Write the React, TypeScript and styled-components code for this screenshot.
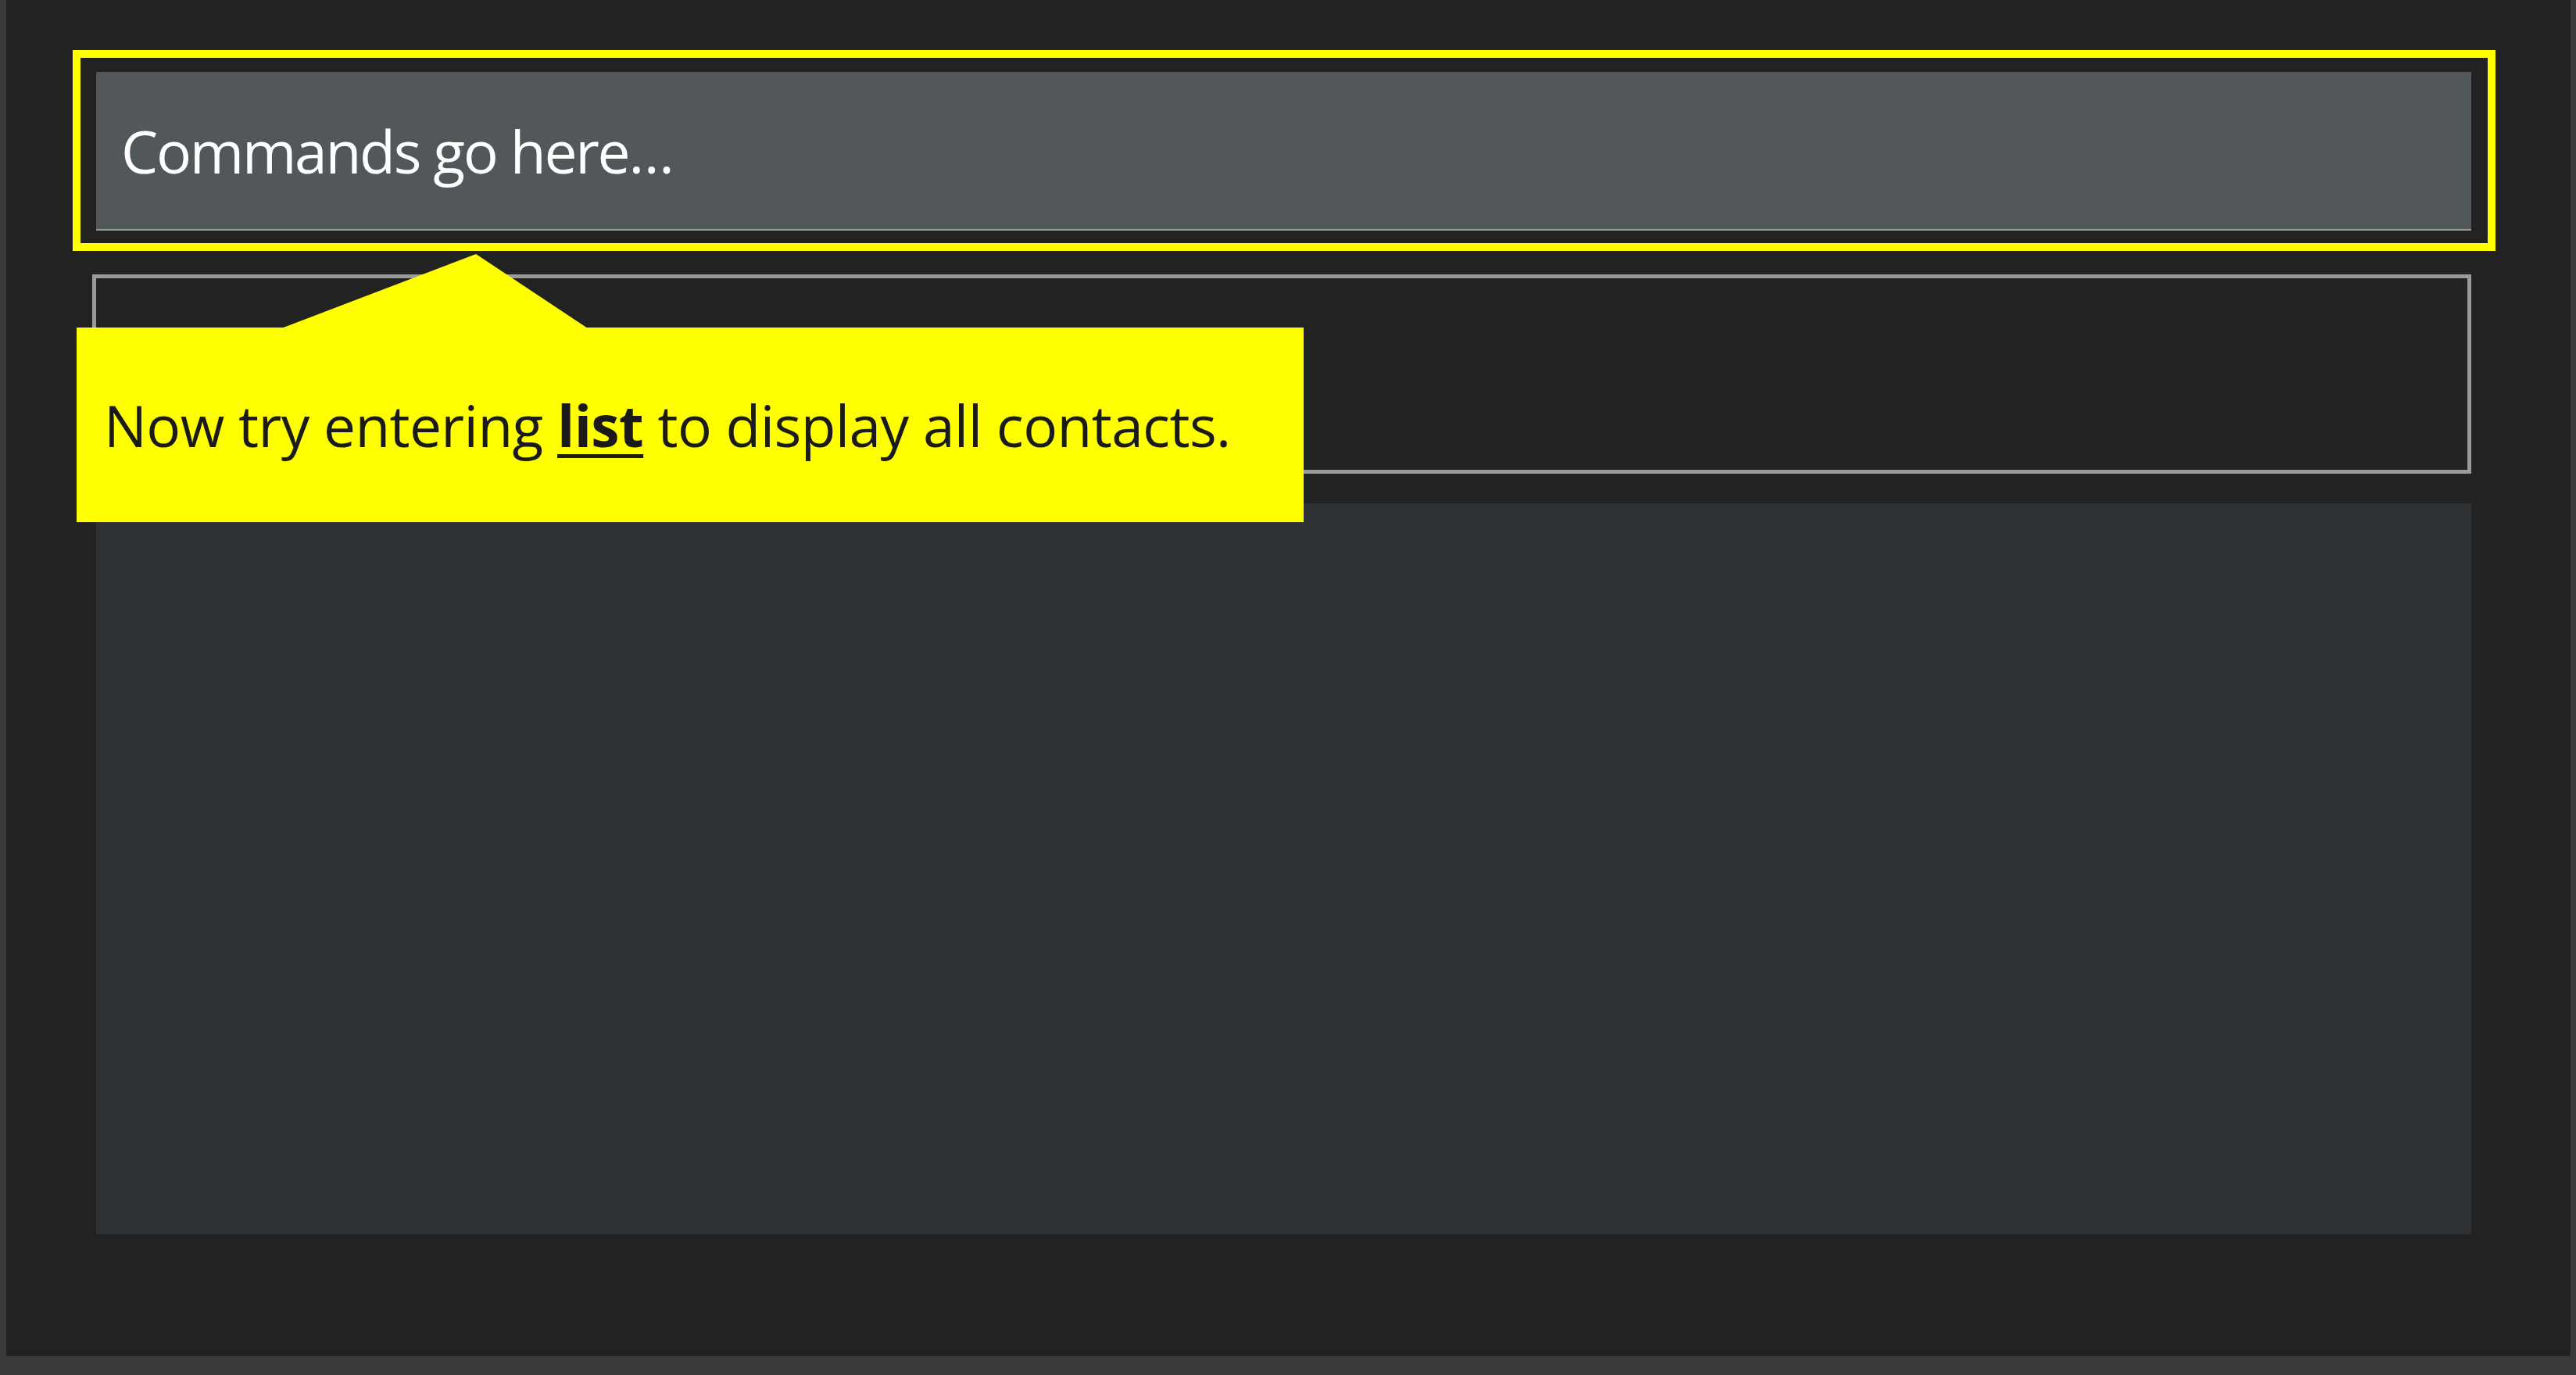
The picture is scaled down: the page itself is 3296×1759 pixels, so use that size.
import React from "react";
import styled, { createGlobalStyle } from "styled-components";

const GlobalStyle = createGlobalStyle`
  html, body {
    margin: 0;
    padding: 0;
    background: #3a3a3a;
  }
  * { box-sizing: border-box; }
`;

const Page = styled.div`
  display: flex;
  height: 1759px;
  padding: 0 7px 24px 8px;
  background: #3a3a3a;
`;

const Main = styled.main`
  position: relative;
  flex: 1;
  display: flex;
  flex-direction: column;
  background: #222222;
  padding: 92px 127px 156px 115px;
`;

const CommandBar = styled.div`
  position: relative;
  height: 203px;
  flex: none;
  display: flex;
  align-items: center;
  padding-left: 32px;
  background: #52575a;
  border-bottom: 2px solid #9a9a9a;
  color: #ffffff;
  font-family: "Open Sans", "Noto Sans", sans-serif;
  font-size: 75px;
  letter-spacing: -2.3px;

  &::after {
    content: "";
    position: absolute;
    top: -28px;
    bottom: -28px;
    left: -30px;
    right: -31px;
    border: 10px solid #ffff00;
    pointer-events: none;
  }
`;

const ResultBox = styled.div`
  flex: none;
  height: 255px;
  margin-top: 56px;
  margin-left: -5px;
  border: 5px solid #9a9a9a;
`;

const ListPanel = styled.div`
  flex: 1;
  margin-top: 38px;
  background: #2f3234;
`;

const Tooltip = styled.div`
  position: absolute;
  left: 90px;
  top: 419px;
  width: 1570px;
  height: 249px;
  display: flex;
  align-items: center;
  padding-left: 35px;
  background: #ffff00;
  color: #1a1a1a;
  font-family: "Open Sans", "Noto Sans", sans-serif;
  font-size: 73px;
  letter-spacing: -0.6px;
  white-space: nowrap;
`;

const Arrow = styled.svg`
  position: absolute;
  left: 262px;
  top: -94px;
  width: 392px;
  height: 95px;
`;

const Keyword = styled.strong`
  font-weight: 700;
  text-decoration: underline;
  text-decoration-thickness: 5px;
  text-underline-offset: 9px;
`;

export default function App() {
  return (
    <>
      <GlobalStyle />
      <Page>
        <Main>
          <CommandBar>Commands go here…</CommandBar>
          <ResultBox />
          <ListPanel />
          <Tooltip>
            <Arrow viewBox="0 0 392 95" preserveAspectRatio="none">
              <polygon points="0,95 249,0 392,95" fill="#ffff00" />
            </Arrow>
            <span>
              Now try entering <Keyword>list</Keyword> to display all contacts.
            </span>
          </Tooltip>
        </Main>
      </Page>
    </>
  );
}
